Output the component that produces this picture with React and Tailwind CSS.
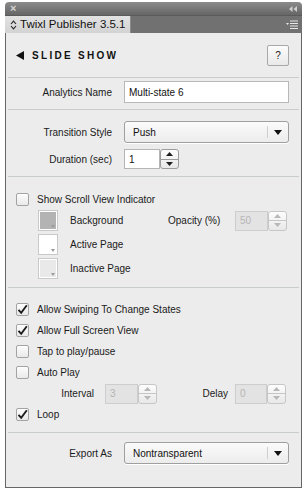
import React from "react";

const font = { fontFamily: '"Liberation Sans", Arial, sans-serif' };

const Separator = () => (
  <div className="mx-[2px] h-px bg-[#c9cccc]" />
);

const Checkbox = ({ checked }) => (
  <div className="w-[13px] h-[13px] rounded-[2px] border border-[#a3a3a3] bg-gradient-to-b from-[#fdfdfd] to-[#e9e9e9] flex items-center justify-center shadow-[inset_0_1px_0_#fff]">
    {checked && (
      <svg width="11" height="11" viewBox="0 0 11 11">
        <path d="M1.5 5.8 L4.2 8.8 L9.8 1.2" fill="none" stroke="#1c1c1c" strokeWidth="1.9" />
      </svg>
    )}
  </div>
);

const CheckRow = ({ checked, label }) => (
  <div className="h-[21px] flex items-center pl-[10px] gap-[8px]">
    <Checkbox checked={checked} />
    <span className="text-[10px] text-[#1a1a1a]">{label}</span>
  </div>
);

const Spinner = ({ disabled }) => {
  const c = disabled ? "#b8b8b8" : "#1e1e1e";
  const b = disabled ? "border-[#c6c6c6]" : "border-[#9b9b9b]";
  return (
    <div className={`w-[19px] h-[20px] flex flex-col rounded-[3px] border ${b} bg-gradient-to-b from-[#fdfdfd] to-[#e8e8e8] overflow-hidden`}>
      <div className={`flex-1 flex items-center justify-center border-b ${b}`}>
        <svg width="7" height="4" viewBox="0 0 7 4"><path d="M0 4 L3.5 0 L7 4 Z" fill={c} /></svg>
      </div>
      <div className="flex-1 flex items-center justify-center">
        <svg width="7" height="4" viewBox="0 0 7 4"><path d="M0 0 L3.5 4 L7 0 Z" fill={c} /></svg>
      </div>
    </div>
  );
};

const NumField = ({ value, disabled, width }) => (
  <div className="flex items-center">
    <div
      className={`h-[20px] ${width} border flex items-center pl-[4px] text-[10px] ${
        disabled
          ? "bg-[#e3e3e3] border-[#cdcdcd] text-[#b5b5b5]"
          : "bg-white border-[#b5b5b5] text-[#111]"
      }`}
    >
      {value}
    </div>
    <Spinner disabled={disabled} />
  </div>
);

const Select = ({ value }) => (
  <div className="w-[165px] h-[22px] rounded-[3px] border border-[#9f9f9f] bg-gradient-to-b from-[#fbfbfb] to-[#ececec] flex items-center shadow-[0_1px_0_#fff]">
    <span className="flex-1 pl-[8px] text-[10px] text-[#111]">{value}</span>
    <div className="w-px h-[12px] bg-[#cfcfcf]" />
    <div className="w-[20px] flex items-center justify-center">
      <svg width="8" height="5" viewBox="0 0 8 5"><path d="M0 0 L8 0 L4 5 Z" fill="#111" /></svg>
    </div>
  </div>
);

const Swatch = ({ fill }) => (
  <div className="w-[20px] h-[21px] border border-[#c9c9c9] bg-white p-[1px]">
    <div className={`relative w-full h-full ${fill}`}>
      <svg className="absolute right-[1px] bottom-[1px]" width="4" height="3" viewBox="0 0 4 3">
        <path d="M0 0 L4 0 L2 3 Z" fill="#9a9a9a" />
      </svg>
    </div>
  </div>
);

const Label = ({ children }) => (
  <div className="w-[106px] text-right text-[10px] text-[#1a1a1a]">{children}</div>
);

export default function App() {
  return (
    <div className="w-[307px] h-[494px] bg-white pt-[2px] pl-[5px]" style={font}>
      <div className="w-[297px]">
        {/* title bar */}
        <div className="h-[13px] rounded-t-[4px] bg-gradient-to-b from-[#8b8b8b] to-[#666] flex items-center justify-between px-[5px]">
          <span className="text-[11px] leading-none text-[#d4d4d4] font-bold">×</span>
          <svg width="8" height="6" viewBox="0 0 8 6">
            <path d="M0 3 L3.5 0 L3.5 6 Z M4.5 3 L8 0 L8 6 Z" fill="#d0d0d0" />
          </svg>
        </div>
        {/* tab row */}
        <div className="h-[18px] bg-[#717171] border-t border-[#5a5a5a] flex items-stretch">
          <div className="w-[126px] bg-gradient-to-b from-[#e2e2e2] to-[#d3d3d3] border-r border-[#8a8a8a] flex items-center pl-[5px] gap-[3px]">
            <svg width="7" height="10" viewBox="0 0 7 10">
              <path d="M1 4 L3.5 1.2 L6 4 M1 6 L3.5 8.8 L6 6" fill="none" stroke="#222" strokeWidth="1.1" />
            </svg>
            <span className="text-[11.5px] text-[#111] leading-none">Twixl Publisher 3.5.1</span>
          </div>
          <div className="flex-1 flex items-center justify-end pr-[4px]">
            <svg width="12" height="9" viewBox="0 0 12 9">
              <path d="M0 3 L3 3 L1.5 5 Z" fill="#e8e8e8" />
              <path d="M4 1 H12 M4 3.5 H12 M4 6 H12 M4 8.5 H12" stroke="#e8e8e8" strokeWidth="1" />
            </svg>
          </div>
        </div>
        {/* panel */}
        <div className="h-[455px] bg-[#ececec] border-x border-b border-[#666] flex flex-col">
          <div className="h-[44px] flex items-center justify-between pl-[10px] pr-[12px]">
            <div className="flex items-center gap-[8px]">
              <svg width="8" height="9" viewBox="0 0 8 9"><path d="M0 4.5 L8 0 L8 9 Z" fill="#111" /></svg>
              <span className="text-[10px] font-bold tracking-[2.3px] text-[#111]">SLIDE SHOW</span>
            </div>
            <div className="w-[22px] h-[21px] rounded-[2px] border border-[#a8a8a8] bg-gradient-to-b from-[#fcfcfc] to-[#e9e9e9] flex items-center justify-center text-[10px] text-[#222]">
              ?
            </div>
          </div>
          <Separator />

          <div className="pt-[3px] pb-[6px] flex items-center gap-[12px]">
            <Label>Analytics Name</Label>
            <div className="w-[165px] h-[22px] bg-white border border-[#b8b8b8] flex items-center pl-[4px] text-[10px] text-[#111]">
              Multi-state 6
            </div>
          </div>
          <Separator />

          <div className="pt-[11px] pb-[7px] flex flex-col gap-[6px]">
            <div className="flex items-center gap-[12px]">
              <Label>Transition Style</Label>
              <Select value="Push" />
            </div>
            <div className="flex items-center gap-[12px]">
              <Label>Duration (sec)</Label>
              <NumField value="1" width="w-[36px]" />
            </div>
          </div>
          <Separator />

          <div className="pt-[15px] pb-[8px] flex flex-col">
            <div className="h-[14px] flex items-center pl-[10px] gap-[8px]">
              <Checkbox />
              <span className="text-[10px] text-[#1a1a1a]">Show Scroll View Indicator</span>
            </div>
            <div className="mt-[4px] pl-[32px] flex flex-col gap-[3px]">
              <div className="flex items-center">
                <Swatch fill="bg-[#b3b3b3]" />
                <span className="ml-[12px] w-[98px] text-[10px] text-[#1a1a1a]">Background</span>
                <span className="w-[67px] text-[10px] text-[#1a1a1a]">Opacity (%)</span>
                <NumField value="50" disabled width="w-[33px]" />
              </div>
              <div className="flex items-center">
                <Swatch fill="bg-white" />
                <span className="ml-[12px] text-[10px] text-[#1a1a1a]">Active Page</span>
              </div>
              <div className="flex items-center">
                <Swatch fill="bg-[#e9e9e9]" />
                <span className="ml-[12px] text-[10px] text-[#1a1a1a]">Inactive Page</span>
              </div>
            </div>
          </div>
          <Separator />

          <div className="pt-[11px] pb-[7px] flex flex-col">
            <CheckRow checked label="Allow Swiping To Change States" />
            <CheckRow checked label="Allow Full Screen View" />
            <CheckRow label="Tap to play/pause" />
            <CheckRow label="Auto Play" />
            <div className="h-[21px] flex items-center">
              <span className="w-[88px] text-right text-[10px] text-[#1a1a1a]">Interval</span>
              <div className="ml-[11px]">
                <NumField value="3" disabled width="w-[33px]" />
              </div>
              <span className="w-[71px] text-right text-[10px] text-[#1a1a1a]">Delay</span>
              <div className="ml-[7px]">
                <NumField value="0" disabled width="w-[32px]" />
              </div>
            </div>
            <CheckRow checked label="Loop" />
          </div>
          <Separator />

          <div className="pt-[9px] flex items-center gap-[12px]">
            <Label>Export As</Label>
            <Select value="Nontransparent" />
          </div>
        </div>
      </div>
    </div>
  );
}
